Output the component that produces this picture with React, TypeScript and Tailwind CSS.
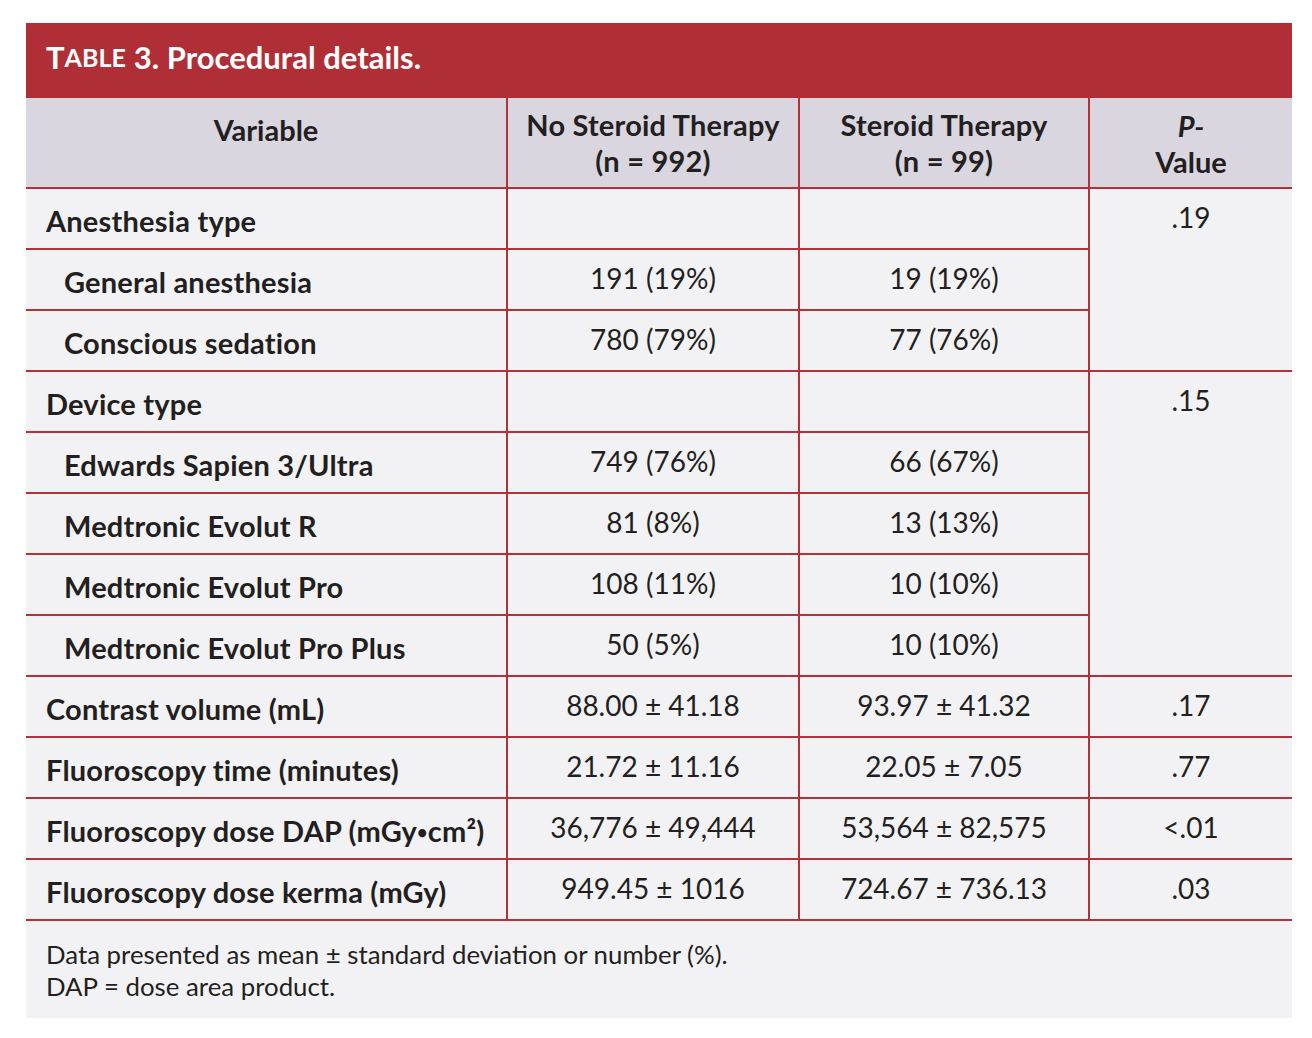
const font = { fontFamily: "Lato, 'Liberation Sans', sans-serif" };

type Row = { label: string; sub?: boolean; a: string; b: string };

const anesthesia: Row[] = [
  { label: "Anesthesia type", a: "", b: "" },
  { label: "General anesthesia", sub: true, a: "191 (19%)", b: "19 (19%)" },
  { label: "Conscious sedation", sub: true, a: "780 (79%)", b: "77 (76%)" },
];

const devices: Row[] = [
  { label: "Device type", a: "", b: "" },
  { label: "Edwards Sapien 3/Ultra", sub: true, a: "749 (76%)", b: "66 (67%)" },
  { label: "Medtronic Evolut R", sub: true, a: "81 (8%)", b: "13 (13%)" },
  { label: "Medtronic Evolut Pro", sub: true, a: "108 (11%)", b: "10 (10%)" },
  { label: "Medtronic Evolut Pro Plus", sub: true, a: "50 (5%)", b: "10 (10%)" },
];

const singles: (Row & { p: string })[] = [
  { label: "Contrast volume (mL)", a: "88.00 ± 41.18", b: "93.97 ± 41.32", p: ".17" },
  { label: "Fluoroscopy time (minutes)", a: "21.72 ± 11.16", b: "22.05 ± 7.05", p: ".77" },
  { label: "Fluoroscopy dose DAP (mGy•cm²)", a: "36,776 ± 49,444", b: "53,564 ± 82,575", p: "<.01" },
  { label: "Fluoroscopy dose kerma (mGy)", a: "949.45 ± 1016", b: "724.67 ± 736.13", p: ".03" },
];

function Label({ text }: { text: string }) {
  // the DAP unit uses a small bullet
  if (text.includes("•")) {
    const [pre, post] = text.split("•");
    return (
      <span>
        {pre}
        <span className="text-[18px] align-[3px]">•</span>
        {post}
      </span>
    );
  }
  return <span>{text}</span>;
}

function Cells({ row }: { row: Row }) {
  return (
    <>
      <div
        className={
          "flex items-center border-b-2 border-r-2 border-[#b3323a] pt-[5px] text-[29px] font-bold tracking-[0.2px] " +
          (row.sub ? "pl-[38px]" : "pl-[20px]")
        }
      >
        <Label text={row.label} />
      </div>
      <div className="flex items-center justify-center border-b-2 border-r-2 border-[#b3323a] pb-[4px]">
        {row.a}
      </div>
      <div className="flex items-center justify-center border-b-2 border-r-2 border-[#b3323a] pb-[4px]">
        {row.b}
      </div>
    </>
  );
}

function Group({ rows, p }: { rows: Row[]; p: string }) {
  return (
    <>
      <Cells row={rows[0]} />
      <div
        className={
          "flex justify-center border-b-2 border-[#b3323a] pt-[7px] " +
          (rows.length === 3 ? "row-span-3" : "row-span-5")
        }
      >
        {p}
      </div>
      {rows.slice(1).map((r) => (
        <Cells key={r.label} row={r} />
      ))}
    </>
  );
}

export default function App() {
  return (
    <div className="min-h-[1038px] bg-white pt-[23px] pl-[26px]" style={font}>
      <div className="w-[1266px] bg-[#f2f2f4] text-[#231f20]">
        <div className="flex h-[75px] items-center bg-[#b02f36] pl-[20px] pb-[6px] font-bold text-white">
          <span className="text-[31px]">T</span>
          <span className="text-[25px]">ABLE</span>
          <span className="ml-[8px] text-[31px]">3. Procedural details.</span>
        </div>
        <div className="grid grid-cols-[482px_292px_290px_202px] grid-rows-[91px] auto-rows-[61px] text-[28px]">
          <div className="flex justify-center border-b-2 border-r-2 border-[#b3323a] bg-[#d9d6e0] pt-[14px] text-[29px] font-bold leading-[36px]">
            Variable
          </div>
          <div className="flex flex-col items-center border-b-2 border-r-2 border-[#b3323a] bg-[#d9d6e0] pt-[9px] text-[29px] font-bold leading-[36px] tracking-[0.2px]">
            <span>No Steroid Therapy</span>
            <span>(n = 992)</span>
          </div>
          <div className="flex flex-col items-center border-b-2 border-r-2 border-[#b3323a] bg-[#d9d6e0] pt-[9px] text-[29px] font-bold leading-[36px] tracking-[0.2px]">
            <span>Steroid Therapy</span>
            <span>(n = 99)</span>
          </div>
          <div className="flex flex-col items-center border-b-2 border-[#b3323a] bg-[#d9d6e0] pt-[10px] text-[29px] font-bold leading-[36px]">
            <span className="italic">P-</span>
            <span>Value</span>
          </div>

          <Group rows={anesthesia} p=".19" />
          <Group rows={devices} p=".15" />

          {singles.map((r) => (
            <div key={r.label} className="contents">
              <Cells row={r} />
              <div className="flex items-center justify-center border-b-2 border-[#b3323a] pb-[4px]">
                {r.p}
              </div>
            </div>
          ))}
        </div>
        <div className="h-[97px] pl-[20px] pt-[17px] text-[25.8px] leading-[32px]">
          <p>Data presented as mean ± standard deviation or number (%).</p>
          <p>DAP = dose area product.</p>
        </div>
      </div>
    </div>
  );
}
